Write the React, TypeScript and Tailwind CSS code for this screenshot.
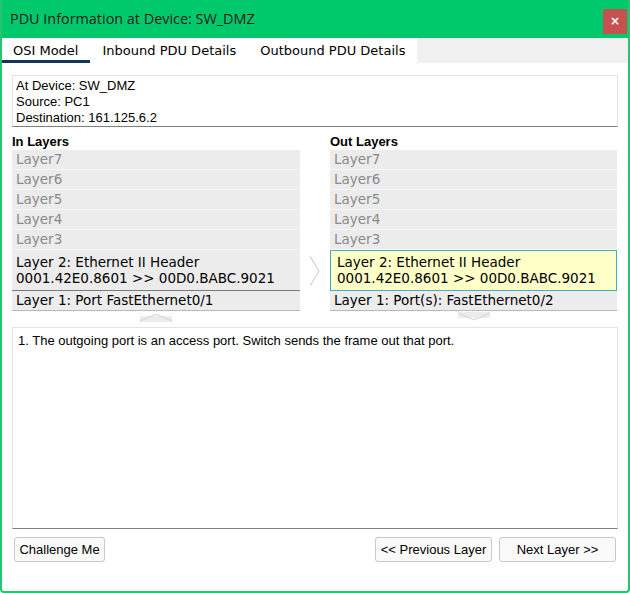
import React from "react";

const UPPER = ["Layer7", "Layer6", "Layer5", "Layer4", "Layer3"];

function LayerColumn({
  title,
  layer1,
  active,
}: {
  title: string;
  layer1: string;
  active?: boolean;
}) {
  return (
    <div className="flex flex-col">
      <div className="h-[21px] pt-[5px] text-[13px] font-bold leading-[16px] text-black [font-family:'Liberation_Sans',Arial,sans-serif]">
        {title}
      </div>
      <div className="flex flex-col bg-[#ececec] [font-family:'DejaVu_Sans',Verdana,sans-serif] text-[13.5px]">
        {UPPER.map((l) => (
          <div
            key={l}
            className="h-[20px] border-b border-[#f6f6f6] pl-[4px] leading-[19px] text-[#8a8a8a]"
          >
            {l}
          </div>
        ))}
        <div
          className={
            active
              ? "h-[41px] border border-[#45aec4] bg-[#ffffc8] pl-[6px] pt-[3px] leading-[16px] text-black"
              : "h-[41px] border-b border-[#7a7a7a] pl-[4px] pt-[4px] leading-[16px] text-black"
          }
        >
          <div>Layer 2: Ethernet II Header</div>
          <div>0001.42E0.8601 &gt;&gt; 00D0.BABC.9021</div>
        </div>
        <div className="h-[20px] border-b border-[#b9b9b9] pl-[4px] leading-[19px] text-black">
          {layer1}
        </div>
      </div>
    </div>
  );
}

export default function App() {
  return (
    <div className="flex h-[593px] w-[630px] flex-col overflow-hidden rounded-b-[4px] border-x-2 border-b-2 border-[#27c46f] bg-white">
      {/* title bar */}
      <div className="-mx-[2px] flex h-[38px] items-center justify-between bg-[#00c96c] pl-[10px] pr-[3px]">
        <span className="text-[14.4px] text-[#1b1b1b] [font-family:'Open_Sans','Noto_Sans',sans-serif]">
          PDU Information at Device: SW_DMZ
        </span>
        <button className="mt-[4px] flex h-[25px] w-[24px] items-center justify-center bg-[#c75050] text-[12px] font-bold text-white [font-family:'DejaVu_Sans',sans-serif]">
          ×
        </button>
      </div>

      {/* tabs */}
      <div className="flex h-[25px] bg-[#f0f0f0] text-[13px] text-black [font-family:'DejaVu_Sans',Verdana,sans-serif]">
        <div className="-ml-[1px] flex border-b-[3px] border-[#15355a] bg-white pl-[12px] pr-[12px] pt-[3px] leading-[19px]">
          OSI Model
        </div>
        <div className="bg-white px-[12px] pt-[3px] leading-[19px]">Inbound PDU Details</div>
        <div className="bg-white px-[12px] pt-[3px] leading-[19px]">Outbound PDU Details</div>
      </div>

      <div className="flex flex-1 flex-col px-[10px] pt-[12px]">
        {/* device info */}
        <div className="h-[52px] border border-[#e3e3e3] border-b-[#7f7f7f] bg-white px-[3px] pt-[2px] text-[13px] leading-[16px] text-black [font-family:'Liberation_Sans',Arial,sans-serif]">
          <div>At Device: SW_DMZ</div>
          <div>Source: PC1</div>
          <div>Destination: 161.125.6.2</div>
        </div>

        {/* layers */}
        <div className="mt-[2px] flex">
          <div className="w-[288px]">
            <LayerColumn title="In Layers" layer1="Layer 1: Port FastEthernet0/1" />
          </div>
          <div className="flex w-[30px] items-start justify-center pt-[126px]">
            <svg width="12" height="32" viewBox="0 0 12 32">
              <path d="M1 1 L10 16 L1 31" fill="none" stroke="#d2d2d2" strokeWidth="1.2" />
            </svg>
          </div>
          <div className="w-[287px]">
            <LayerColumn title="Out Layers" layer1="Layer 1: Port(s): FastEthernet0/2" active />
          </div>
        </div>

        {/* up / down markers */}
        <div className="flex h-[16px]">
          <div className="flex w-[288px] justify-center pt-[1px]">
            <svg width="34" height="10" viewBox="0 0 34 10">
              <rect x="1" y="4" width="32" height="6" fill="#ececec" />
              <path d="M1 9 L17 2 L33 9" fill="none" stroke="#d4d4d4" strokeWidth="1" />
            </svg>
          </div>
          <div className="w-[30px]" />
          <div className="flex w-[287px] justify-center pt-[1px]">
            <svg width="34" height="10" viewBox="0 0 34 10">
              <rect x="1" y="0" width="32" height="6" fill="#ececec" />
              <path d="M1 1 L17 8 L33 1" fill="none" stroke="#d4d4d4" strokeWidth="1" />
            </svg>
          </div>
        </div>

        {/* description */}
        <div className="h-[202px] border border-[#e3e3e3] border-b-[#7f7f7f] bg-white px-[5px] pt-[5px] text-[13px] leading-[16px] text-black [font-family:'Liberation_Sans',Arial,sans-serif]">
          1. The outgoing port is an access port. Switch sends the frame out that port.
        </div>

        {/* buttons */}
        <div className="mt-[8px] flex items-center justify-between pl-[2px] pr-[2px] text-[13px] text-black [font-family:'Liberation_Sans',Arial,sans-serif]">
          <button className="h-[25px] w-[91px] rounded-[3px] border border-[#c9c9c9] bg-[#fafafa]">
            Challenge Me
          </button>
          <div className="flex gap-[7px]">
            <button className="h-[25px] w-[117px] rounded-[3px] border border-[#c9c9c9] bg-[#fafafa]">
              &lt;&lt; Previous Layer
            </button>
            <button className="h-[25px] w-[117px] rounded-[3px] border border-[#c9c9c9] bg-[#fafafa]">
              Next Layer &gt;&gt;
            </button>
          </div>
        </div>
      </div>
    </div>
  );
}
